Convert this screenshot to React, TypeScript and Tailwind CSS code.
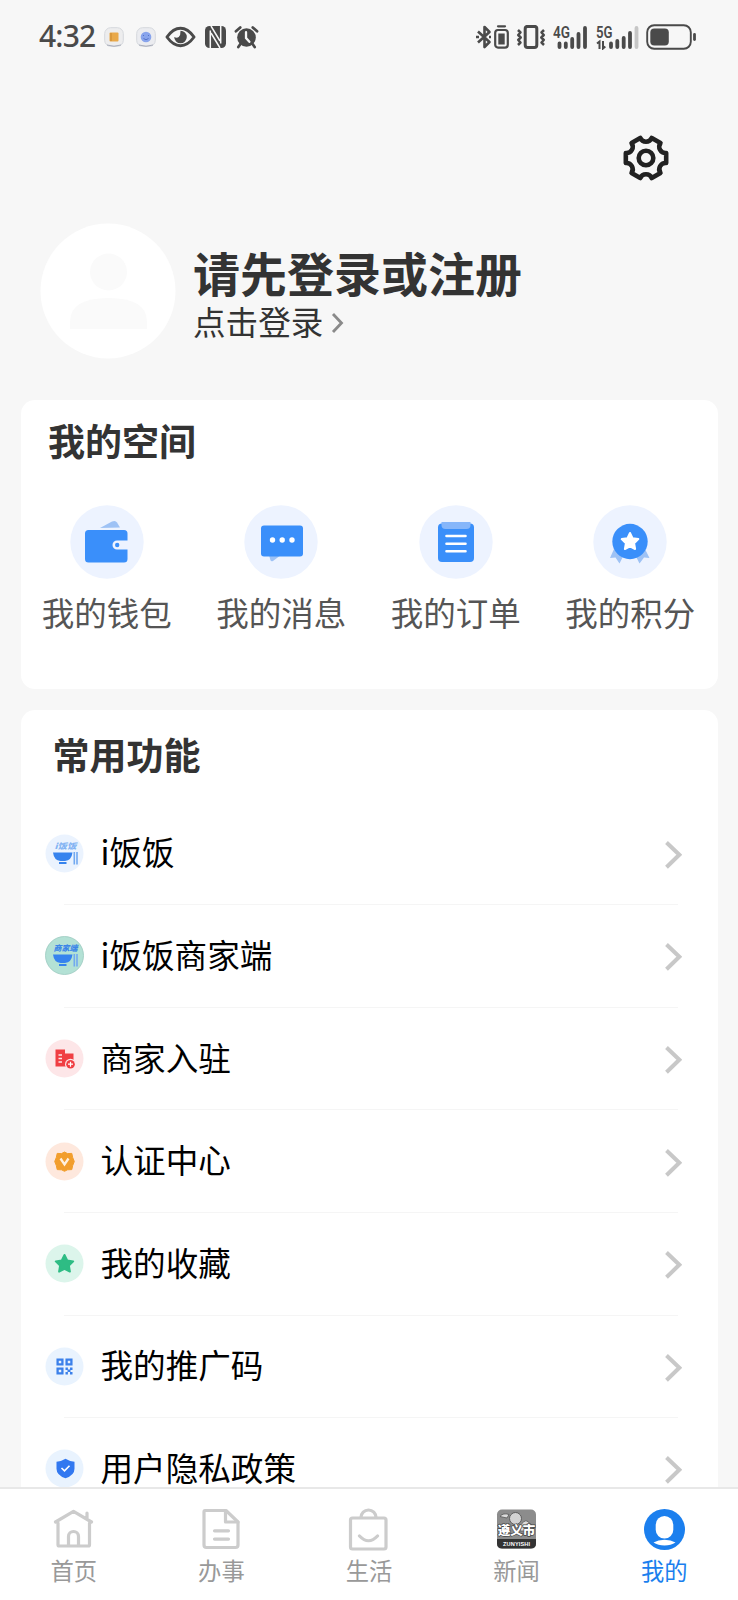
import React from "react";

const gearPath = (() => {
  const pt = (deg: number, r: number) => {
    const a = (deg * Math.PI) / 180;
    return `${(24 + r * Math.cos(a)).toFixed(2)} ${(24 + r * Math.sin(a)).toFixed(2)}`;
  };
  let d = `M${pt(-14, 20.8)}`;
  for (let k = 0; k < 6; k++) {
    d += `L${pt(k * 60 + 14, 20.8)}A6.3 6.3 0 0 0 ${pt(k * 60 + 46, 20.8)}`;
  }
  return d + "Z";
})();

function StatusBar() {
  return (
    <div className="flex h-[74px] shrink-0 items-center pl-[39px] pr-[41px] text-[#4a4a4a]">
      <span className="-mt-[2px] w-[56px] whitespace-nowrap font-['Noto_Sans'] text-[30px] font-medium leading-none tracking-[-0.8px]">4:32</span>
      <svg className="ml-[9px]" width="20" height="20" viewBox="0 0 20 20">
        <rect x=".7" y=".7" width="18.6" height="18.6" rx="6" fill="#ededee" stroke="#d5d8dd" />
        <path d="M3 18Q10 20.500 17 18" stroke="#a9adba" fill="none" />
        <rect x="5.500" y="5.500" width="9" height="9" rx="1" fill="#e9a94a" />
        <path d="M7 6v8" stroke="#c98830" />
      </svg>
      <svg className="ml-[12px]" width="20" height="20" viewBox="0 0 20 20">
        <rect x=".7" y=".7" width="18.6" height="18.6" rx="6" fill="#ebecf0" stroke="#d5d8dd" />
        <path d="M3 18Q10 20.500 17 18" stroke="#a9adba" fill="none" />
        <circle cx="10" cy="10" r="5.300" fill="#88a4ec" />
        <path d="M7.500 8v1M12.500 8v1M7.500 11.500q2.500 2.500 5 0" stroke="#5573c9" fill="none" />
      </svg>
      <svg className="ml-[9px]" width="31" height="22" viewBox="0 0 32 22">
        <path d="M2 11Q8.500 2 16 2t14 9q-6.500 9-14 9T2 11Z" fill="none" stroke="currentColor" strokeWidth="3" strokeLinejoin="round" />
        <path d="M16 4.500a6.500 6.500 0 1 1-6.500 6.500q2.500 1.500 4.700 0 2-2 1.800-6.500Z" fill="currentColor" />
      </svg>
      <svg className="ml-[9px]" width="21" height="22" viewBox="0 0 21 22">
        <rect x="0" y="0" width="21" height="22" rx="4.500" fill="currentColor" />
        <path d="M5.300 4.500V22M15.700 0v17.500" stroke="#f7f7f7" strokeWidth="1.500" />
        <path d="M6 0 15 15M6 7l9 15" stroke="#f7f7f7" strokeWidth="1.500" />
      </svg>
      <svg className="ml-[8px]" width="25" height="24" viewBox="0 0 26 24">
        <circle cx="13" cy="12.500" r="9.700" fill="currentColor" />
        <path d="M2 6 6.500 2M24 6 19.500 2M6.500 19.500 4.500 22.500M19.500 19.500l2 3" stroke="currentColor" strokeWidth="2.800" strokeLinecap="round" />
        <path d="M12.500 7v6l3.500 4" fill="none" stroke="#f7f7f7" strokeWidth="2.400" strokeLinecap="round" />
      </svg>

      <div className="ml-auto flex items-center">
        <svg width="16" height="24" viewBox="0 0 16 24">
          <path d="M2 6.500 13.500 17 8.500 22V2l5 5L2 17.500" fill="none" stroke="currentColor" strokeWidth="2.600" strokeLinejoin="round" />
          <path d="M0 12h3M13 12h2" stroke="currentColor" strokeWidth="2.400" />
        </svg>
        <svg className="ml-[2px]" width="15" height="24" viewBox="0 0 15 24">
          <path d="M4 1.300h7" stroke="currentColor" strokeWidth="2.200" strokeLinecap="round" />
          <rect x="1.200" y="5" width="12.600" height="17.600" rx="2.800" fill="none" stroke="currentColor" strokeWidth="2.200" />
          <rect x="4.300" y="8.500" width="6.400" height="11" fill="currentColor" />
        </svg>
        <svg className="ml-[7px]" width="30" height="24" viewBox="0 0 30 24">
          <rect x="9.200" y="1.400" width="11.600" height="21" rx="2.400" fill="none" stroke="currentColor" strokeWidth="3" />
          <path d="m2 5 2.500 2.500L2.200 10l2.500 2.500L2.200 15l2.300 2.500L2 20M28 5l-2.500 2.500 2.300 2.500-2.500 2.500 2.500 2.500-2.300 2.500L28 20" fill="none" stroke="currentColor" strokeWidth="2.500" strokeLinejoin="round" />
        </svg>
        <svg className="ml-[7px]" width="35" height="25" viewBox="0 0 35 25">
          <text x="0" y="12.500" fill="currentColor" fontSize="16" fontWeight="600" fontFamily="Roboto" textLength="17" lengthAdjust="spacingAndGlyphs">4G</text>
          <path d="M6.500 18.500v3.500M12.800 18.500v3.500M19.200 14v8M25.500 9v13M32 3v19" stroke="currentColor" strokeWidth="3.800" strokeLinecap="round" />
        </svg>
        <svg className="ml-[8px]" width="44" height="25" viewBox="0 0 44 25">
          <text x="0" y="12.500" fill="currentColor" fontSize="16" fontWeight="600" fontFamily="Roboto" textLength="16.500" lengthAdjust="spacingAndGlyphs">5G</text>
          <path d="m1 18.500 2.500-2V24M7 16v7.500l2.300-2" fill="none" stroke="currentColor" strokeWidth="2" />
          <path d="M15 18.500v3.500M21.300 16v6M27.700 13v9M34 8v14" stroke="currentColor" strokeWidth="3.800" strokeLinecap="round" />
          <path d="M40.500 3v19" stroke="#c6c6c6" strokeWidth="3.800" strokeLinecap="round" />
        </svg>
        <svg className="ml-[6px]" width="51" height="26" viewBox="0 0 51 26">
          <rect x="1.200" y="1.200" width="43.600" height="23.600" rx="7" fill="none" stroke="currentColor" strokeWidth="1.900" />
          <rect x="4.300" y="4.500" width="18.500" height="17" rx="4" fill="currentColor" />
          <path d="M48.500 10.500v5" stroke="currentColor" strokeWidth="2.800" strokeLinecap="round" />
        </svg>
      </div>
    </div>
  );
}

const wallet = (
  <>
    <path d="M30 23 42 16.500q3.500-1.500 5 1l3 5Z" fill="#9ec2f5" />
    <path d="M18.500 25H54q3.500 0 3.500 3.500V35.500H47a4.500 4.500 0 0 0 0 9H57.500V54q0 3.500-3.500 3.500H18.500Q15 57.500 15 54V28.500Q15 25 18.500 25Z" fill="#3a8ffa" />
    <circle cx="47.200" cy="40" r="2.200" fill="#3a8ffa" />
  </>
);
const message = (
  <>
    <path d="M25 50h12l-8 6q-2 1-2.600-1Z" fill="#9ec2f5" />
    <rect x="17" y="20.500" width="42" height="31" rx="3" fill="#3a8ffa" />
    <circle cx="28.500" cy="35" r="2.700" fill="#fff" />
    <circle cx="38.200" cy="35" r="2.700" fill="#fff" />
    <circle cx="48" cy="35" r="2.700" fill="#fff" />
  </>
);
const order = (
  <>
    <rect x="19" y="18.500" width="36" height="38.500" rx="4" fill="#3a8ffa" />
    <path d="M22.500 17h29v3q0 4-4 4h-21q-4 0-4-4Z" fill="#86b6fa" />
    <path d="M27.500 31h19M27.500 38.700h19M27.500 46.200h19" stroke="#fff" strokeWidth="2.600" strokeLinecap="round" />
  </>
);
const points = (
  <>
    <path d="m21 44-4 9 5.500-.5 4 6 5-10ZM52 44l4.500 9-5.500-.5-4.500 6-5-10Z" fill="#9ec2f5" />
    <circle cx="37" cy="36.500" r="17.700" fill="#3a8ffa" />
    <path d="m37 28 2.500 5.300 5.800.8-4.200 4.100 1 5.800-5.100-2.700-5.100 2.700 1-5.800-4.200-4.100 5.800-.8Z" fill="#fff" stroke="#fff" strokeWidth="2" strokeLinejoin="round" />
  </>
);
const shortcuts = [
  { label: "我的钱包", art: wallet },
  { label: "我的消息", art: message },
  { label: "我的订单", art: order },
  { label: "我的积分", art: points },
];

function Bowl({ caption }: { caption: string }) {
  return (
    <>
      <text x="20.500" y="15" textAnchor="middle" fontSize="7.800" fontWeight="900" fontStyle="italic" fill={caption === "商家端" ? "#3b86e8" : "#83b3f3"} fontFamily="Noto Sans CJK SC, sans-serif" textLength={caption === "商家端" ? 24 : 22} lengthAdjust="spacingAndGlyphs">{caption}</text>
      <path d="M8 18.500h19.500q-1 8-7.500 8.500h-4.500Q9 26.500 8 18.500ZM14 28h7.500v2H14Z" fill="#3683ee" />
      <path d="M29.300 18v12.500M32 18v12.500" stroke="#72a9f0" strokeWidth="1.600" />
    </>
  );
}

const rows = [
  { label: "i饭饭", bg: "#ebf3fe", art: <Bowl caption="i饭饭" /> },
  { label: "i饭饭商家端", bg: "#b3e1d5", ring: "#9ac9bf", art: <Bowl caption="商家端" /> },
  {
    label: "商家入驻", bg: "#fde6e8",
    art: (
      <>
        <path d="M10.500 10.500h9.500v4h8.500v13h-18Z" fill="#f03e43" />
        <path d="M13.500 16h3.500M13.500 19.500h3.500M13.500 23h3.500" stroke="#fde6e8" strokeWidth="1.400" />
        <circle cx="25.500" cy="25.200" r="5.500" fill="#fde6e8" />
        <circle cx="25.500" cy="25.200" r="4.300" fill="#f03e43" />
        <path d="M23 25.200h5M25.500 22.700v5" stroke="#fff" strokeWidth="1.200" />
      </>
    ),
  },
  {
    label: "认证中心", bg: "#fee8dd",
    art: (
      <>
        <path d="m19.500 10 3 1.600 4.300-.2.900 4.100 1.600 4-1.600 4-.9 4.100-4.300.2-3 1.500-3-1.500-4.300-.2-.9-4.100-1.600-4 1.600-4 .9-4.100 4.300.2Z" fill="#f29e2d" stroke="#f29e2d" strokeWidth="1" strokeLinejoin="round" />
        <path d="m15.500 16.500 4 6 4-6" fill="none" stroke="#fff0df" strokeWidth="2.300" />
      </>
    ),
  },
  {
    label: "我的收藏", bg: "#dcf5eb",
    art: <path d="m19.500 11 2.700 5.500 6 .9-4.300 4.200 1 6-5.400-2.800-5.400 2.800 1-6-4.300-4.200 6-.9Z" fill="#2ebc84" stroke="#2ebc84" strokeWidth="2" strokeLinejoin="round" />,
  },
  {
    label: "我的推广码", bg: "#e9f3fe",
    art: (
      <>
        <path d="M12.600 12.600h4.800v4.800h-4.800ZM21.600 12.600h4.800v4.800h-4.800ZM12.600 21.600h4.800v4.800h-4.800Z" fill="none" stroke="#3b80ea" strokeWidth="2.300" />
        <path d="M20.500 20.500h2.400v2.400h-2.400ZM25 20.500h2.500v2.400H25ZM22.500 22.500h3v2.600h-3ZM20.500 25h2.400v2.500h-2.400ZM25 25h2.500v2.500H25Z" fill="#3b80ea" />
      </>
    ),
  },
  {
    label: "用户隐私政策", bg: "#e9f3fe",
    art: (
      <>
        <path d="M20.500 9.800q4.500 2.900 9 2.900v7q0 6.500-9 9.500-9-3-9-9.500v-7q4.500 0 9-2.900Z" fill="#3278f0" />
        <path d="m16.500 19 3 2.800 5-5" fill="none" stroke="#fff" strokeWidth="1.600" />
      </>
    ),
  },
];

const tabs = [
  {
    label: "首页",
    art: (
      <g fill="none" stroke="#cccccc" strokeWidth="3.200" strokeLinejoin="round" strokeLinecap="round">
        <path d="M5 15v21.700q0 1.300 1.300 1.300h28.900q1.300 0 1.300-1.300V15M2.500 14 20.500 3.300 38.500 14M34 5v5" />
        <path d="M15.500 37V28.500a5 5 0 0 1 10 0V37" />
      </g>
    ),
  },
  {
    label: "办事",
    art: (
      <g fill="none" stroke="#cccccc" strokeWidth="3.200" strokeLinejoin="round" strokeLinecap="round">
        <path d="M4 2.500h21L37 14v23q0 2.500-2.500 2.500h-29Q3 39.500 3 37V4Q3 2.500 4 2.500Z" />
        <path d="M24.500 3v11H37M13.500 22.800h14M13.500 31.100h14" />
      </g>
    ),
  },
  {
    label: "生活",
    art: (
      <g fill="none" stroke="#cccccc" strokeWidth="3.200" strokeLinecap="round">
        <rect x="2.500" y="10" width="35.500" height="31" rx="2" />
        <path d="M13 9.500a7.500 7.500 0 0 1 15 0M11.500 28q9 9.500 18 0" />
      </g>
    ),
  },
  {
    label: "新闻",
    art: (
      <>
        <rect x="1" y="1.500" width="39" height="39" rx="5" fill="#8c8c8c" />
        <path d="M4 8.500q3-4 9-2l-2 3.500ZM24 18q4-6 7-5l6 5v5H24Z" fill="#dcdcdc" stroke="#555" strokeWidth=".8" />
        <circle cx="19.500" cy="10.500" r="6" fill="#d2d2d2" stroke="#555" strokeWidth=".9" />
        <path d="M1 31h39v4.500q0 5-5 5H6q-5 0-5-5Z" fill="#333" />
        <text x="20.500" y="27" textAnchor="middle" fontSize="12.500" fontWeight="900" fill="#fff" stroke="#444" strokeWidth="1.300" paintOrder="stroke" fontFamily="Noto Sans CJK SC, sans-serif">遵义市</text>
        <text x="20.500" y="37.500" textAnchor="middle" fontSize="5.600" fontWeight="700" fill="#fff" fontFamily="Liberation Sans" textLength="27">ZUNYISHI</text>
      </>
    ),
  },
  {
    label: "我的", active: true,
    art: (
      <>
        <circle cx="20.500" cy="21.500" r="20.500" fill="#1b7fee" />
        <rect x="11.700" y="8" width="17.600" height="22.500" rx="8.800" fill="#fff" />
        <path d="M9.500 34.500q4.500-2.700 11-2.700t11 2.700q-4.500 3-11 3t-11-3Z" fill="#fff" />
      </>
    ),
  },
];

export default function App() {
  return (
    <div className="flex h-[1600px] w-[738px] flex-col overflow-hidden bg-[#f7f7f7] font-['Noto_Sans_CJK_SC','Noto_Sans',sans-serif] text-[#333]">
      <StatusBar />
      <main className="flex min-h-0 flex-1 flex-col overflow-hidden">
        <div className="flex h-[149px] shrink-0 justify-end pr-[68px] pt-[60px]">
          <svg width="48" height="48" viewBox="0 0 48 48" fill="none" stroke="#222" strokeWidth="4.600" strokeLinejoin="round">
            <path d={gearPath} />
            <circle cx="24" cy="24" r="7.300" />
          </svg>
        </div>
        <section className="flex h-[177px] shrink-0 pl-[40px]">
          <svg className="shrink-0" width="136" height="136" viewBox="0 0 136 136">
            <circle cx="68" cy="68" r="67.500" fill="#fff" />
            <circle cx="68.500" cy="49" r="18.500" fill="#fafafa" />
            <path d="M30 106V99q0-24 38.500-24T107 99v7Z" fill="#fafafa" />
          </svg>
          <div className="ml-[17px] flex flex-col pt-5">
            <h1 className="h-[56px] text-[47px] font-bold leading-[58px]">请先登录或注册</h1>
            <div className="flex h-[44px] items-center text-[32.6px] leading-[44px]">
              点击登录
              <svg className="ml-2 mt-[3px]" width="14" height="22" viewBox="0 0 14 22">
                <path d="m2 2 8.500 9L2 20" fill="none" stroke="#8a8a8a" strokeWidth="2.800" />
              </svg>
            </div>
          </div>
        </section>

        <section className="ml-[20.5px] h-[289px] w-[697px] shrink-0 rounded-[14px] bg-white">
          <h2 className="h-[105px] pl-[27.5px] pt-[14px] text-[37px] font-bold leading-[52px]">我的空间</h2>
          <div className="-ml-px grid w-[698px] grid-cols-4">
            {shortcuts.map((s) => (
              <div key={s.label} className="flex flex-col items-center">
                <svg width="74" height="74" viewBox="0 0 74 74">
                  <circle cx="37" cy="37" r="36.700" fill="#edf3ff" />
                  {s.art}
                </svg>
                <span className="mt-[10px] text-[32.5px] leading-[46px] text-[#555]">{s.label}</span>
              </div>
            ))}
          </div>
        </section>

        <section className="ml-[20.5px] mt-[21px] w-[697px] shrink-0 rounded-t-[14px] bg-white">
          <h2 className="h-[92.6px] pl-[32px] pt-[18px] text-[37px] font-bold leading-[52px]">常用功能</h2>
          {rows.map((r) => (
            <div key={r.label}>
              <div className="flex h-[101.6px] items-center pl-6 pr-[36px]">
                <svg className="shrink-0" width="39" height="39" viewBox="0 0 39 39">
                  <circle cx="19.500" cy="19.500" r="19" fill={r.bg} stroke={r.ring ?? "none"} strokeWidth=".8" />
                  {r.art}
                </svg>
                <span className="-mt-[4px] ml-[17px] text-[32.6px] leading-[46px] text-black">{r.label}</span>
                <svg className="ml-auto mt-[3px]" width="18" height="30" viewBox="0 0 18 30">
                  <path d="m2.500 2.500 12.800 12.300L2.500 27.300" fill="none" stroke="#c8c8c8" strokeWidth="4" />
                </svg>
              </div>
              <div className="ml-[43px] mr-[40px] h-px bg-[#f5f5f5]" />
            </div>
          ))}
        </section>
      </main>

      <nav className="grid h-[113px] shrink-0 grid-cols-5 border-t-2 border-[#e8e8e8] bg-white">
        {tabs.map((t) => (
          <div key={t.label} className="flex flex-col items-center pt-[19px]">
            <svg width="41" height="43" viewBox="0 0 41 43">{t.art}</svg>
            <span className={`mt-[3px] text-[23.3px] leading-[32px] ${t.active ? "text-[#1b7fee]" : "text-[#999]"}`}>{t.label}</span>
          </div>
        ))}
      </nav>
    </div>
  );
}
